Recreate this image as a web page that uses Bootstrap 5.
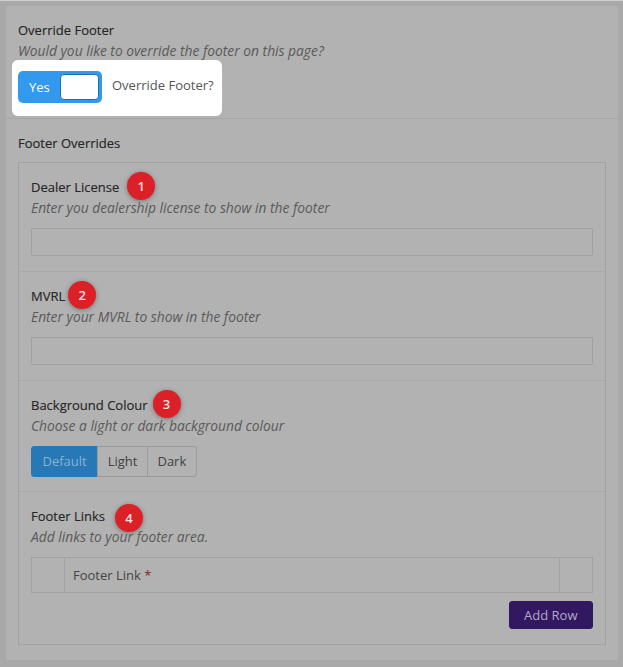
<!DOCTYPE html>
<html lang="en">
<head>
<meta charset="utf-8">
<title>Footer settings</title>
<link rel="stylesheet" href="https://cdn.jsdelivr.net/npm/bootstrap@5.3.0/dist/css/bootstrap.min.css">
<style>
html,body{height:100%;}
body{background:#a9a9a9;font-family:"Open Sans","Noto Sans",sans-serif;font-size:13px;line-height:20px;color:#2e2e2e;border-top:1px solid #cfcfcf;overflow:hidden;}
.shell{margin:0 5px 0 6px;padding-top:4px;}
.sheet{background:#b2b2b2;border-top:1px solid #a8a8a8;height:655px;}
.top-sec{height:113px;padding:14px 12px 0;border-bottom:1px solid #a7a7a7;position:relative;}
.ttl{font-size:13px;line-height:20px;font-weight:400;margin:0;color:#262626;display:flex;align-items:center;-webkit-text-stroke:.15px #262626;}
.hint{font-style:italic;font-size:13.8px;line-height:20px;color:#5a5a5a;margin:1px 0 0;}
.spot{background:#fff;border-radius:6px;width:210px;height:56px;margin:-1px 0 0 -6px;padding:11px 6px;position:relative;z-index:2;gap:10px;color:#555;font-size:13px;}
.tog{width:84px;height:32px;background:#3399ee;border-radius:5px;color:#fff;padding:3px 3px 3px 11px;justify-content:space-between;}
.tog span{font-size:13px;line-height:26px;}
.knob{width:39px;height:26px;background:#fff;border:1px solid #1e6fb5;border-radius:4px;}
.spot-lbl{margin-top:4px;}
.bot-sec{padding:14px 12px 0;}
.frame{border:1px solid #a2a2a2;margin-top:9px;height:483px;}
.fld{padding:14px 12px 0;border-bottom:1px solid #a9a9a9;}
.fld:last-child{border-bottom:0;}
.f1{height:109px;}.f2{height:109px;}.f3{height:111px;}
.pin{width:28px;height:28px;margin:-5px 0 -3px;border-radius:50%;background:#db2027;color:#f4e2e2;font-size:13px;font-weight:600;line-height:28px;text-align:center;-webkit-text-stroke:0;box-shadow:0 1px 5px rgba(0,0,0,.35);}
.pin-low{margin:-2px 0 -6px;}
.g8{gap:8px;}.g3{gap:3px;}.g5{gap:5px;}.g10{gap:10px;}
.inp{height:28px;background:#b2b2b2;border:1px solid #a0a0a0;border-radius:2px;margin-top:10px;}
.seg{margin-top:10px;}
.seg .btn{--bs-btn-font-size:13px;--bs-btn-padding-y:4px;--bs-btn-padding-x:9.5px;--bs-btn-line-height:21px;--bs-btn-border-color:#9a9a9a;--bs-btn-color:#414141;--bs-btn-border-radius:3px;}
.seg .on{background:#2878b6;border-color:#2878b6;color:#84b2d3;padding-left:10.5px;padding-right:10.5px;}
.rows{border:1px solid #a2a2a2;margin-top:10px;height:36px;display:grid;grid-template-columns:32px 1fr 33px;}
.rows>div+div{border-left:1px solid #a2a2a2;}
.rows .cap{padding:7px 8px;color:#444;}
.req{color:#8e1d20;}
.add-wrap{margin-top:8px;}
.add{--bs-btn-bg:#321761;--bs-btn-border-color:#321761;--bs-btn-color:#b5aac6;--bs-btn-font-size:13px;--bs-btn-padding-x:14.5px;--bs-btn-padding-y:3px;--bs-btn-line-height:20px;--bs-btn-border-radius:3px;}
</style>
</head>
<body>
<div class="shell">
  <div class="sheet">
    <section class="top-sec">
      <h2 class="ttl">Override Footer</h2>
      <p class="hint">Would you like to override the footer on this page?</p>
      <div class="spot d-flex align-items-start">
        <div class="tog d-flex"><span>Yes</span><div class="knob"></div></div>
        <div class="spot-lbl">Override Footer?</div>
      </div>
    </section>
    <section class="bot-sec">
      <h2 class="ttl">Footer Overrides</h2>
      <div class="frame">
        <div class="fld f1">
          <h3 class="ttl g8">Dealer License <span class="pin">1</span></h3>
          <p class="hint">Enter you dealership license to show in the footer</p>
          <div class="inp"></div>
        </div>
        <div class="fld f2">
          <h3 class="ttl g3">MVRL <span class="pin">2</span></h3>
          <p class="hint">Enter your MVRL to show in the footer</p>
          <div class="inp"></div>
        </div>
        <div class="fld f3">
          <h3 class="ttl g5">Background Colour <span class="pin">3</span></h3>
          <p class="hint">Choose a light or dark background colour</p>
          <div class="btn-group seg" role="group">
            <button type="button" class="btn on">Default</button>
            <button type="button" class="btn">Light</button>
            <button type="button" class="btn">Dark</button>
          </div>
        </div>
        <div class="fld">
          <h3 class="ttl g10">Footer Links <span class="pin pin-low">4</span></h3>
          <p class="hint">Add links to your footer area.</p>
          <div class="rows"><div></div><div class="cap">Footer Link <span class="req">*</span></div><div></div></div>
          <div class="add-wrap d-flex justify-content-end"><button type="button" class="btn add">Add Row</button></div>
        </div>
      </div>
    </section>
  </div>
</div>
</body>
</html>
